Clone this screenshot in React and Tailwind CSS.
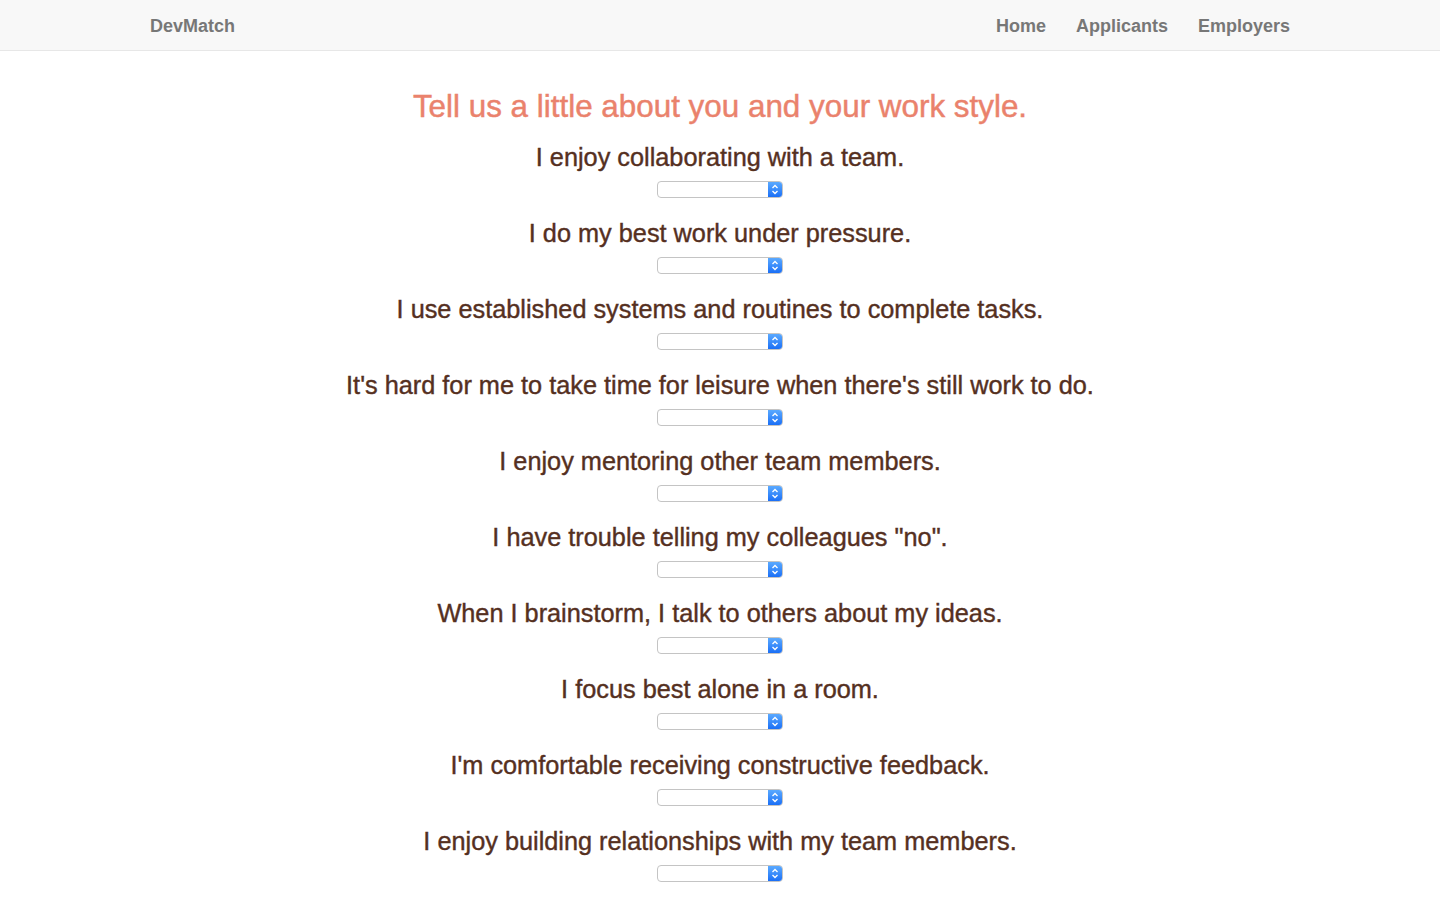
const questions = [
  "I enjoy collaborating with a team.",
  "I do my best work under pressure.",
  "I use established systems and routines to complete tasks.",
  "It's hard for me to take time for leisure when there's still work to do.",
  "I enjoy mentoring other team members.",
  'I have trouble telling my colleagues "no".',
  "When I brainstorm, I talk to others about my ideas.",
  "I focus best alone in a room.",
  "I'm comfortable receiving constructive feedback.",
  "I enjoy building relationships with my team members.",
];

function SelectBox() {
  return (
    <div className="mx-auto mt-[11px] flex h-[17px] w-[126px] overflow-hidden rounded-[4px] border border-[#c4c4c4] bg-white">
      <div className="flex-1" />
      <div className="flex w-[14px] items-center justify-center bg-gradient-to-b from-[#5aa9ff] to-[#1a6ff6]">
        <svg width="8" height="11" viewBox="0 0 8 11" fill="none" stroke="white" strokeWidth="1.3">
          <path d="M1.5 4 L4 1.5 L6.5 4" />
          <path d="M1.5 7 L4 9.5 L6.5 7" />
        </svg>
      </div>
    </div>
  );
}

function App() {
  return (
    <div className="min-h-screen bg-white font-['Liberation_Sans',Arial,sans-serif]">

      <nav className="h-[51px] border-b border-[#e7e7e7] bg-[#f8f8f8]">
        <div className="mx-auto flex h-full w-[1140px] items-center justify-between pt-[2px]">
          <span className="text-[18px] font-bold text-[#777]">DevMatch</span>
          <div className="flex gap-[30px] text-[18px] font-bold text-[#777]">
            <span>Home</span>
            <span>Applicants</span>
            <span>Employers</span>
          </div>
        </div>
      </nav>

      <main className="mx-auto w-[1140px] pb-[20px] text-center">

        <h1 className="mt-[39px] text-[31.4px] leading-[33px] text-[#ea826c] [-webkit-text-stroke:0.45px_#ea826c]">
          Tell us a little about you and your work style.
        </h1>

        <div className="mt-[21px]">
          {questions.map((q) => (
            <div key={q} className="pb-[22px]">
              <h3 className="text-[25.3px] leading-[26px] text-[#55301f] [-webkit-text-stroke:0.4px_#55301f]">{q}</h3>
              <SelectBox />
            </div>
          ))}
        </div>

      </main>

    </div>
  );
}

export default App;
